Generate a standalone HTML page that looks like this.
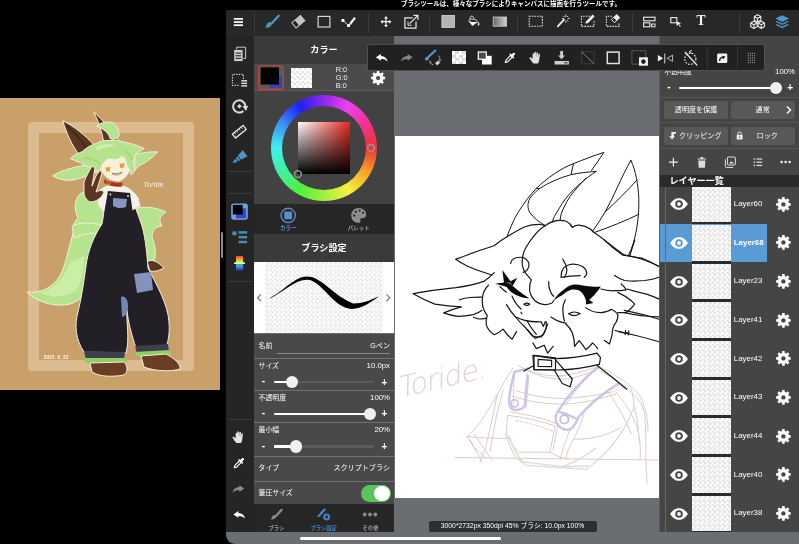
<!DOCTYPE html>
<html lang="ja">
<head>
<meta charset="utf-8">
<title>MediBang Paint</title>
<style>
*{box-sizing:border-box;margin:0;padding:0}
html,body{width:799px;height:544px;overflow:hidden;background:#000}
body{position:relative;font-family:"Liberation Sans","Noto Sans CJK JP",sans-serif;color:#fff}
.abs{position:absolute}
svg{display:block;overflow:visible}
.ck{background:repeating-conic-gradient(#e9e9e9 0% 25%,#fff 0% 50%) 0 0/4.5px 4.5px}
.ck2{background:repeating-conic-gradient(#e3e3e3 0% 25%,#fff 0% 50%) 0 0/4.9px 4.9px}
#art{left:0;top:98px;width:220px;height:291.5px;background:#c9a06a}
#frame{left:27.5px;top:122.3px;width:166.5px;height:248.4px;border:11px solid #ddbb91;border-radius:4px}
#screen{left:225.5px;top:10px;width:574px;height:534px;background:#6a6e73;border-radius:0 0 0 9px}
#tip{left:401px;top:-0.8px;height:10px;font-size:6.5px;line-height:10px;white-space:nowrap;font-weight:bold}
#topbar{left:225.5px;top:10px;width:574px;height:25.5px;background:#282828}
.vsep{position:absolute;width:1px;background:#3c3c3c}
#lcol{left:225.5px;top:35.5px;width:28.5px;height:496.5px;background:#252525}
.hsep{position:absolute;height:1px;background:#3c3c3c}
.hsep2{position:absolute;height:1.4px;background:#565656}
#cpanel{left:254px;top:35.5px;width:140px;height:496.5px;background:#424242}
.hdr{position:absolute;width:140px;background:#3a3a3a;text-align:center;font-weight:bold;font-size:9.1px;white-space:nowrap}
.row{position:absolute;width:140px;background:#494949;border-top:1.3px solid #707070}
.lab{position:absolute;font-size:6.9px;line-height:10px;color:#fff;white-space:nowrap}
.val{position:absolute;font-size:7.8px;line-height:10px;color:#fff;white-space:nowrap}
.trk{position:absolute;height:2.2px;border-radius:1px;background:#5c5c5c}
.trk i{position:absolute;left:0;top:0;height:2.2px;background:#fff;border-radius:1px}
.knob{position:absolute;border-radius:50%;background:#eef1f4}
.pm{position:absolute;font-size:10px;font-weight:bold;line-height:10px;width:8px;text-align:center}
#rpanel{left:659px;top:35.5px;width:140px;height:496.5px;background:#454545;border-left:1px solid #5a5c5f}
.btn{position:absolute;background:#585858;border-radius:3px;font-size:7.1px;text-align:center;color:#fff;white-space:nowrap}
#fbar{left:366.8px;top:44.2px;width:398.4px;height:27.2px;background:#212121;border:1px solid #505050;border-radius:3px}
#canvas{left:395px;top:136px;width:264px;height:362.3px;background:#fff}
#status{left:428.5px;top:521px;width:168px;height:10.5px;background:#2e2f31;border-radius:2px;font-size:6.8px;line-height:10.5px;text-align:center;color:#fff;white-space:nowrap}
#home{left:299.5px;top:536.5px;width:201px;height:3.5px;border-radius:2px;background:#fff}
#wrap{position:absolute;left:0;top:0;width:799px;height:544px;will-change:transform}
</style>
</head>
<body>
<div id="wrap">
<div id="art" class="abs"></div><div id="frame" class="abs"></div>
<svg class="abs" style="left:0;top:0" width="225" height="544" viewBox="0 0 225 544"><path d="M82,212 C70,232 68,262 60,276 C52,288 40,294 27,292 C36,301 50,306 64,305 C78,304 86,296 90,280 C94,262 96,236 98,220Z" fill="#b6e48e" stroke="#f3eedd" stroke-width="1" stroke-linejoin="round"/><path d="M70,262 C64,280 52,290 40,293 C52,298 66,298 76,290 C82,282 84,268 84,256Z" fill="#d4f2b0" opacity="0.7"/><path d="M137,208 C146,206 158,208 166,212 C160,216 158,220 162,226 C156,226 152,230 152,238 C156,246 156,256 154,262 L148,264 C146,250 142,236 138,226Z" fill="#b6e48e" stroke="#f3eedd" stroke-width="1" stroke-linejoin="round"/><path d="M147,262 C152,258 158,262 164,268 C160,270 156,272 150,271Z" fill="#5b3722" stroke="#f3eedd" stroke-width="1" stroke-linejoin="round"/><path d="M80,194 C74,200 74,210 78,218 C74,222 72,228 74,232 C80,230 86,230 90,234 C94,228 100,226 104,228 C104,218 104,206 100,196 C94,190 86,190 80,194Z" fill="#b6e48e" stroke="#f3eedd" stroke-width="1" stroke-linejoin="round"/><path d="M72,226 C80,222 92,222 104,226 L102,234 C92,232 82,234 74,238Z" fill="#b6e48e" stroke="#f3eedd" stroke-width="1" stroke-linejoin="round"/><path d="M108,191 L130,193 C134,204 138,214 142,226 C146,240 147,256 148,268 C156,284 168,304 169,322 C170,334 168,342 166,347 L136,348 C132,336 128,322 127,310 C126,322 130,338 126,353 L84,352 C76,340 74,326 78,312 C82,296 84,280 86,266 C88,250 94,236 102,224 C104,212 106,200 108,191Z" fill="#222026" stroke="#f3eedd" stroke-width="1" stroke-linejoin="round"/><path d="M100,190 C104,186 112,184 120,186 C128,186 134,192 138,198 L140,206 L132,210 L130,194 L108,192 L104,212 L98,204Z" fill="#f4f1ea" stroke="#f3eedd" stroke-width="1" stroke-linejoin="round"/><path d="M108,191 L130,193 L133,214 L104,214Z" fill="#222026"/><path d="M113,198 L127,199 L126,207 C121,209 117,208 113,206Z" fill="#8796c0"/><circle cx="110.4" cy="194.4" r="1" fill="#ddd"/><circle cx="128" cy="196" r="1" fill="#ddd"/><path d="M134,274 L151,272 L153,290 L137,293Z" fill="#8393bd"/><path d="M121,297 C125,295 128,300 128,306 C128,312 126,316 122,317Z" fill="#7786b0"/><path d="M84,351 L125,352 L124,360 L86,360Z" fill="#3e3e4c"/><path d="M135,346 L168,344 L169,352 L137,354Z" fill="#3e3e4c"/><path d="M84,358 L126,358 L127,363 L122,362 L119,365 L114,362 L109,365 L104,362 L99,365 L94,362 L89,364 L85,362Z" fill="#8fcf63"/><path d="M134,352 L170,350 L171,355 L166,354 L162,357 L157,355 L152,358 L147,355 L142,358 L137,356Z" fill="#8fcf63"/><path d="M90,363 L124,362 C128,366 128,372 124,375 C112,377 100,377 92,372Z" fill="#6b3d24" stroke="#f3eedd" stroke-width="1" stroke-linejoin="round"/><path d="M141,356 L166,354 C174,358 181,364 180,369 C170,372 154,371 144,367Z" fill="#6b3d24" stroke="#f3eedd" stroke-width="1" stroke-linejoin="round"/><path d="M62.8,120.8 C74,126 86,136 94,145 L80,156 C72,146 66,132 62.8,120.8Z" fill="#5b3722" stroke="#f3eedd" stroke-width="1" stroke-linejoin="round"/><path d="M66,125 C74,132 82,141 88,150" fill="none" stroke="#3e2415" stroke-width="1.2"/><path d="M93.7,112 C101,118 112,130 119.5,142 L103.8,142.4 C102,132 98,120 93.7,112Z" fill="#5b3722" stroke="#f3eedd" stroke-width="1" stroke-linejoin="round"/><path d="M96.7,126.2 C102,121 110,121.3 113.5,123.4 C117.5,126 119.6,131 119,136 C117,139.4 113,140.4 110,138.4 C109,133 104,129 96.7,126.2Z" fill="#b6e48e" stroke="#f3eedd" stroke-width="1" stroke-linejoin="round"/><path d="M90.7,164.7 C76,166 62,170 52.6,175.8 C58,179 64,180.4 70.5,180.4 C77,179.6 83,177.6 88.7,174.8 L98,172Z" fill="#b6e48e" stroke="#f3eedd" stroke-width="1" stroke-linejoin="round"/><path d="M135.2,154.6 C143,152.4 150,151.6 157.8,151.9 C152,158 146,162.6 139.2,165.7 L134,171Z" fill="#b6e48e" stroke="#f3eedd" stroke-width="1" stroke-linejoin="round"/><path d="M102,160 C110,155 124,155 130,161 C132,170 128,178 119,181.4 C110,181.4 104,177 101,170Z" fill="#f7efd9"/><path d="M70.5,158.6 C74,155 78,153 82.6,151.5 C86,147.6 91,145 96.7,143.4 C101,141 106,140 110.9,140.4 C116,140 121,141 125,142.4 C130,143 135,144.6 139.2,146.5 L144.3,148.5 C141,150.6 138,152.6 135.2,154.5 C134,157 133.2,159.4 133.2,161.6 C134.4,164 135.2,167 135.2,169.7 C134.4,172 133,173.8 131.1,174.8 C130.4,171.4 129,168.4 127.1,165.7 C126.4,162 125,158.6 123,155.6 C121,157.4 119,158.8 117,159.6 C114,159.8 111.4,159.4 108.9,158.6 C106.6,160 104.6,161.8 102.8,163.7 C101.4,166.4 100.4,169 99.8,171.8 C96.4,171 93.4,169.6 90.7,167.7 C87,166.4 83.6,164.8 80.6,162.6 C77,161.6 73.6,160.2 70.5,158.6Z" fill="#b6e48e" stroke="#f3eedd" stroke-width="1" stroke-linejoin="round"/><path d="M96,147 C102,143.4 110,143 117,146 C110,146 103,147.6 97,151Z" fill="#d4f2b0" opacity="0.8"/><path d="M84,158 C90,158 96,160 100,164 M124,150 C128,152 131,156 132,160" fill="none" stroke="#8fcf63" stroke-width="1"/><path d="M105.4,167.6 L110.4,167 L109.6,171.4 L106.4,171.6Z" fill="#e8a020"/><path d="M119.4,164 L124.6,163 L123.6,167.8 L120.4,168Z" fill="#e8a020"/><path d="M112,173.4 C115,176 119.6,175.4 122,172.2 C119,173.4 115,174 112,173.4Z" fill="#fff" stroke="#6b3d24" stroke-width="0.6"/><path d="M104.6,179 C110,182 116,183.4 122.6,182.6 L122,186.4 C116,187.4 109,186 104,183Z" fill="#a83424"/><rect x="107" y="180.6" width="3" height="3.6" fill="none" stroke="#e0b040" stroke-width="0.7"/><path d="M84,182 C86,176 90,170 92,166 L95,168 C94,174 93,180 92,186 L96,176 L100,170 L102,173 C100,180 98,186 96,192 C100,190 102,190 104,192 C102,198 96,202 90,202 C86,200 84,196 84,192Z" fill="#5b3722" stroke="#f3eedd" stroke-width="1" stroke-linejoin="round"/><text x="143.6" y="186.6" font-family="Liberation Sans,sans-serif" font-size="6.6" fill="#fdf8ec" font-style="italic" letter-spacing="0.3">Toride.</text><text x="43.6" y="358.6" font-family="Liberation Mono,monospace" font-size="4.6" fill="#fdf8ec" font-weight="bold">2022.6.22</text></svg>
<div class="abs" style="left:221px;top:232px;width:2px;height:26px;background:#8c8c8c;border-radius:1px"></div>
<div id="screen" class="abs"></div>
<div id="tip" class="abs">ブラシツールは、様々なブラシによりキャンバスに描画を行うツールです。</div>
<div id="canvas" class="abs"></div>
<svg class="abs" style="left:395px;top:136px" width="264" height="362.3" viewBox="395 136 264 362.3"><g fill="none" stroke="#ddcbc7" stroke-width="1" stroke-linecap="round"><path d="M455,457.5 L657.6,460"/><path d="M513,368 C507,377 502,386 497.3,394.4 C492,404 487,412 481.5,420.7 C477,427 472,432 467,436.5 L473.7,447 L486.8,458.8"/><path d="M467,436.5 C480,438 494,438.6 508,438.4"/><path d="M470,440 L482,462 M474,434 L492,460"/><path d="M497.3,394.4 L492,420 L486,446 L480,462"/><path d="M503,390 L496,418 L490,452"/><path d="M514.4,370.8 L513,407.6"/><path d="M518.3,365.5 C530,372 544,376 558,376 C572,375 586,371 597.2,366.8"/><path d="M522,368 C536,376 552,380 566,379 C580,377 592,372 602,367"/><path d="M528.8,376 L526.2,407.6"/><path d="M515.7,390.5 C532,396 548,398.6 565.6,398.4 C582,397.6 598,395 612.9,391.8"/><path d="M512,396 C530,402 548,404.6 566,404 C584,403 600,399 616,394"/><path d="M507.8,415.4 C523,417 540,420.6 555.1,426 L549.9,452.2 L518.3,452.2 C513,446 509,440 506.5,433.8Z"/><path d="M510,412 C526,414 542,418 558,424 L553,450"/><path d="M597.2,368.1 C585,379 574,392 565.6,404.9"/><path d="M599.8,370.8 C612,377 624,385 634,394.4 C639,400 642.5,406 644.5,412.8 C646,428 646,444 645.8,460.1 L647.1,483.8"/><path d="M604,369 C618,376 631,385 640,396 C646,408 648,420 648,432"/><path d="M607.7,391.8 C617,404 625,418 631.3,433.8"/><path d="M612,388 C622,398 630,410 636,424 C640,436 641,448 640,460"/><path d="M565.6,458.8 C567,452 570,445 573.5,439.1 C578,430 582,422 584,414"/><path d="M560,460 C562,450 566,440 570,430"/><path d="M573.5,439.1 C590,440 606,436 620,428"/><path d="M549.9,452.2 C556,456 562,458 568,459"/><path d="M515.7,420.7 C528,422.5 541,426.4 552.5,431.2" stroke-dasharray="3 2"/></g><g fill="none" stroke="#c4bce2" stroke-width="2.4" stroke-linecap="round" opacity="0.85"><path d="M528.8,368.1 L514.4,372.1 C512,381 510,390 509.1,399.7 C508.6,406 511,410 515,410 C520,410 524,408 524.9,404.9 C525.6,395 526.6,385 527.5,374.7"/><path d="M598.5,366.8 C583,379 569,394 557.8,411.5 C555,416 555,421 558,425 C562,430 568,431 572,428 C575,425 577,421 578.8,416.8"/><path d="M618.2,383.9 C603,393 590,404 578.8,416.8"/><path d="M557.8,411.5 C564,413 571,415.6 577,419"/></g><circle cx="514.6" cy="403.4" r="3.6" fill="none" stroke="#c4bce2" stroke-width="1.6"/><circle cx="564.3" cy="419.4" r="4.2" fill="none" stroke="#c4bce2" stroke-width="1.8"/><g fill="none" stroke="#d3e0d4" stroke-width="1.3" stroke-linecap="round"><path d="M505.2,433.8 C508,442 511.5,450 515.7,457.5 L526.2,465.4 L586.7,469.3 C596,462 605,454 612.9,444.4 C622,433 629,421 634,407.6 C634,401 633,395 631.3,389.2"/><path d="M509,436 C512,446 517,455 523,462 L563,466.7 L588,466"/><path d="M563,466.7 C575,462 586,456 596,448"/><path d="M634,405 C637,417 639,429 639.2,441.7"/></g><text x="0" y="0" font-family="DejaVu Sans,Liberation Sans,sans-serif" font-weight="200" font-size="29" fill="#e2d3cf" transform="translate(399 398) rotate(-13) skewX(-14)" letter-spacing="-1">Toride.</text><g fill="none" stroke="#161616" stroke-width="1.2" stroke-linecap="round" stroke-linejoin="round"><path d="M507,236.8 C511,226 514,219 518.3,212.1 C524,203 530,195 536.3,188.4 C542,183 548,178 554.3,173.8 C560,170 566,166.5 573.5,163.6 C584,159.5 594,155.5 603.9,152.4 C601.5,156 599,159.5 597.1,162.5 C595,165.5 593,168 591.5,170.4" stroke-width="1"/><path d="M573.5,163.6 L571.2,173.8" stroke-width="1"/><path d="M596,171.5 C587,172 578,173 570.1,174.9 C559,178 548,183 539.7,188.4 C534,193 530,197 528.4,201.9 C527.5,206 528,209 529.5,212.1 C533,217.5 539,222 545.3,225.6" stroke-width="1"/><path d="M596,171.5 C591,175 586.5,178 582.5,181.7 C576,187 570.5,192.5 565.6,198.6 C561,205 557.5,211 554.3,216.6 L552.1,222.2" stroke-width="1"/><path d="M585.9,178.3 C580,184 575,190 570.1,196.3 C566,203 563,208.5 561.1,214.3 L560,220.4" stroke-width="1"/><path d="M539.7,188.4 L536.3,188.4" stroke-width="1"/><path d="M630.9,160.3 C626,169 621.5,178 617.4,187.3 C613.5,196 609.5,204 605,212.1 C601,219 597,225 592.6,231.2" stroke-width="1"/><path d="M630.9,160.3 C633.5,166 635.3,172 636.5,178.3 C637.8,185 638.6,192 638.8,198.6 C639,206 638.6,214 637.7,221.1 C636.8,229 635.3,236.5 633.2,243.6 C632,247.5 630.4,251.5 628.6,254.9" stroke-width="1"/><path d="M605,212.1 C616,202 627,191 636.5,180.5" stroke-width="1"/><path d="M594.9,232.3 C610,227 625,221 638.8,214.3" stroke-width="1"/><path d="M455.8,259.3 C462,257 468,254.8 473.8,252.5 C481,250 488,247.6 494.1,245.8 C500,241 504,238.5 507,236.8 C513,233 519,229.5 525,226.7 C530,225 535.5,224.3 540.8,224.5 L545.3,225.6"/><path d="M545.3,225.6 C548.5,223 552.5,221.2 556.6,220.6 C560.5,220.1 564,220.5 566.7,221.5 C569.5,223 571.2,225 572.3,227.4 C574.5,225.8 576.8,225 579.1,225.1 C583.5,225.6 587.3,227 590.4,229 L593.7,232.3"/><path d="M593.7,232.3 C598,235 602,238 606.1,241.4 C612,246 618,250.5 624.1,254.9 C630,256.5 636,257.5 642.2,258.2 C648,260.5 653.5,263.3 659,266.4"/><path d="M455.8,259.3 C459.5,262 463.2,264.2 467.1,266 C473,268.8 479,271 485.1,272.8 L491.8,275"/><path d="M494.3,272.7 C491,276 487.6,279 483.8,281.4 C475,284.4 465.6,286.4 455.9,287.6 C441.6,289 427.3,291 413.1,293.7 C420,297.6 427.3,301 434.9,304.1 C443.6,305.6 452.4,306.5 461.1,306.8"/><path d="M459.4,299.8 C462.8,298.6 466.3,297.8 469.9,297.5 C474,297.2 478,297.1 482.1,297.2"/><path d="M461.1,306.8 C455.2,308.4 449.4,310.4 443.7,312.9 C448.2,314.6 452.8,315.8 457.6,316.4 C463,316.4 468.2,315.8 473.4,314.6 C476.6,313.6 479.5,312.2 482.1,310.3"/><path d="M473.4,317.2 L478.6,319 C481.4,319 484,318.7 486.5,318.1"/><path d="M488.5,285.2 C485.5,288 483.6,291.5 482.8,295.3 C482,299 482,303 482.8,306.6 C483.8,310 485.3,313 487.3,315.6 C486.2,318.5 485.8,321.5 486.2,324.6 C487.5,328.8 490.3,332.2 494.1,334.7 C497.5,333.6 500.5,331.7 503.1,329.1 C505.5,333 508.5,336.4 512.1,339.2 L516.6,331.4"/><path d="M545.3,225.6 C538,230 531,239 525.6,248 C523,253 521.8,259 522.3,264.9 C522.8,268 524,271 525.6,273.2 C527.5,275.6 529.4,277.8 531.3,279.8 C529.8,283.6 529.3,287.5 529.7,291.4 C530.6,295 532.3,298 534.7,300.5 C537.6,303 541,304.4 544.6,304.6 C547.4,304.6 549.8,304 552,303 L553.7,300.5"/><path d="M548.7,281.5 C548.4,285 549,288.4 550.4,291.4 C551.2,293.3 552.3,295 553.7,296.3"/><path d="M510.7,263.3 C511,261 512.5,259.3 514.8,258.3 C517.5,257.2 520.4,257 523.1,257.5 C526,258.6 528,260.6 528.9,263.3 C529.3,265.8 528.7,268 527.2,269.9 C526,271.2 524.7,272 523.1,272.4"/><path d="M562.8,259.1 C565,262.4 566.4,266 566.9,269.9 C566.8,272.6 566,275 564.6,277.2"/><path d="M561.1,276.5 C561,273.4 561.8,270.6 563.6,268.2 C566,265.6 569,264.3 572.7,264.1 C576.4,264 579.8,264.9 582.6,266.6 C585,268.3 586.4,270.5 586.8,273.2 C586.6,274.8 585.8,276.2 584.3,277.3"/><path d="M561.1,277.3 C567.4,276.2 573.8,275.7 580.1,275.7"/><path d="M523.9,304.2 C525.6,302.8 527.8,302.8 529.7,304 C528,305.7 525.8,305.9 523.9,304.2Z"/><path d="M521,312.2 L521.8,313.6"/><path d="M565.3,299.7 C563.6,303 562.8,306.3 562.8,309.6 C562.9,313.6 563.4,317.5 564.4,321.2"/><path d="M568.6,313.8 C572,311.6 576.4,311.6 580.1,313.6 C576.6,316 572.4,316.2 568.6,313.8Z"/><path d="M506.5,304.6 C509,309 512,313.2 515.6,317 C518.5,318.4 521.6,319.5 524.7,320.3 C529,321.4 534.6,321.9 541.2,321.8 L543.4,326.4 L545.2,321.6 L546.2,322"/><path d="M515.6,317 C518.6,320.8 522,324.4 525.6,327.8 C528,330.8 530.4,333.5 533,336 C535.8,336.9 538.6,337.2 541.3,336.9 C543.6,334.2 545.2,331.2 546.2,327.8 L546.2,322"/><path d="M527.2,321.2 C529.8,325.8 532.8,330.2 536.3,334.4"/><path d="M551,317 C556,320.6 561,322.6 566,323.2"/><path d="M499.9,286.4 C501.8,288.6 504,290.6 506.5,292.2"/><path d="M512,296 C514,301 517,305.4 521,309"/><path d="M565.6,323.8 C568.5,326.3 570.8,329.3 572.3,332.8 C573.8,337 574.6,341.6 574.6,346.3 L579.1,340.7 C581.6,343.4 583.9,346.4 585.9,349.7 C588.5,347.8 590.7,345.5 592.6,342.9 C594.5,344.5 596.2,346.4 597.6,348.6"/><path d="M585.7,307.6 C590,311 595.5,312.8 601.5,312.6 C606,312 609.5,310.8 611.1,309.3 C614,310.5 616.2,312.2 617.8,314.3 C618.2,318 617,321.5 614.5,324.5 L612.9,328.3 C612.6,333.6 611.5,338.8 609.5,344 L604.5,340.5"/><path d="M532.9,342.9 L536.3,348.6 L544.2,345.2 L547.6,353.1 L553.2,346.3"/><path d="M527.3,329.4 C529.6,332.8 532.2,335.8 535.2,338.4 L543.1,335 C545,331.4 546.5,327.7 547.6,323.8"/><path d="M604.3,240 C610,245.5 616.3,250.5 622.9,255.2 L629.7,256 L634.7,240"/><path d="M629.7,256 C635,257 640,258.4 644.9,260.3 C649.6,262 654.2,264 658.4,266.2"/><path d="M614.5,275.5 C617.5,277.6 620.9,279.2 624.6,280.5 C631,281.2 638,281.2 644.9,280.5 C650,279.8 654.8,278.7 659.2,277.2"/><path d="M600.9,289 C605.4,290.4 610,291 614.5,290.7 C618.6,290.8 622.5,290.5 626.3,289.8 C625,287.5 623.3,285.5 621.2,283.9"/><path d="M627.1,289 C633.5,291 640,292.7 646.6,294.1 C651,295.6 655.2,297.3 659.2,299.1"/><path d="M617.8,292.4 C622.6,294.6 627.2,297.4 631.4,300.8 L634.7,304.2 C632.3,307.4 629.5,310.2 626.3,312.6 L617.8,312.6"/><path d="M624.6,312.6 C631.4,314.2 638.2,315.4 644.9,316 C649.8,316.5 654.6,316.8 659.2,316.9"/><path d="M624.1,310.3 C636,312.6 648,315.6 659,319.3"/><path d="M619,331.6 C632,334.4 646,337.8 659,341.8"/><path d="M615.1,330.5 L624.1,332.8 M625.6,330.4 L625.2,334.6 M628.8,330.8 L628.4,335 M625.4,332.5 L628.6,332.9"/><path d="M532.9,355.3 L554.3,358.7 C569,358.5 584,356.4 597.1,353.1 L600.5,357.6 L599.4,364.3 C586,367.6 572,369.6 557.7,370 L534,369.6Z"/><path d="M534,355.3 L555.5,357.8 L555.5,370 L534,369.6Z"/><path d="M538.1,359.4 L551.6,360.4 L551.6,366.6 L538.1,366.4Z"/><path d="M555.5,359.8 L572.3,379 L570.1,386.8 L562.2,383.5 L554.3,370"/><path d="M534,365.5 L523.9,371.1"/><path d="M597.1,365.5 C607,373 617,381 626.4,389"/></g><path d="M495,284 C499.5,283 504,282.4 508.2,282.6 C511.6,285 514.4,287.6 517.4,290 C521.2,292.8 525,295.4 529.4,298.6 C524,298.2 519.4,296.8 515,294.6 C511.6,292.6 508.8,290 506.6,287 C503,285.6 499,284.8 495,284Z" fill="#0a0a0a"/><path d="M504,283 L502.4,269.9 L511,282Z" fill="#0a0a0a"/><path d="M509,282 L517.3,277.8 L512.6,286Z" fill="#0a0a0a"/><path d="M553.7,300.5 C556,296.6 559,293.2 562.8,290.6 C566,287.6 569.2,285.6 572.7,284.8 C576,284.2 579.4,284.6 582.6,285.6 C588.6,286.8 594.7,287 600.8,286.4 C599.4,288.8 597.8,291 595.9,293 C594,295.6 591.7,297.8 589.2,299.7 L593.4,303 L585.9,304.6 C586.4,301.4 585.8,298.6 584.3,296.4 C583,294 581.4,292 579.3,290.6 C576.6,289.6 573.8,289.3 571,289.7 C568,290.8 565.2,292.5 562.8,294.7 C559.6,296.4 556.5,298.3 553.7,300.5Z" fill="#0a0a0a"/></svg>
<div id="topbar" class="abs"></div>
<div class="vsep" style="left:253.5px;top:13px;height:20px"></div>
<div class="vsep" style="left:367.5px;top:13px;height:20px"></div>
<div class="vsep" style="left:429.0px;top:13px;height:20px"></div>
<div class="vsep" style="left:517.0px;top:13px;height:20px"></div>
<div class="vsep" style="left:631.5px;top:13px;height:20px"></div>
<div class="vsep" style="left:739.0px;top:13px;height:20px"></div>
<svg class="abs" style="left:0;top:0" width="799" height="544" viewBox="0 0 799 544"><rect x="233.8" y="18.05" width="9.2" height="1.7" fill="#fff"/><rect x="233.8" y="21.20" width="9.2" height="1.7" fill="#fff"/><rect x="233.8" y="24.35" width="9.2" height="1.7" fill="#fff"/><g transform="translate(272.20 21.30) scale(1.00)"><path d="M-0.6,2.2 L6.5,-5.5" stroke="#4f94c4" stroke-width="2.3" stroke-linecap="round" fill="none"/><path d="M-1.9,0.9 C-0.3,1.9 -0.2,4.2 -2.2,5.5 C-3.8,6.5 -5.8,6.5 -7.2,6.3 C-5.9,5.3 -6,3.6 -4.9,2.3 C-4,1.2 -2.9,0.5 -1.9,0.9Z" fill="#4f94c4"/></g><g transform="translate(298.20 21.80) rotate(-40)"><path d="M-5.6,-3.4 h11.4 v6.8 h-11.4z" fill="none" stroke="#c4c4c4" stroke-width="1"/><path d="M-1.6,-3.4 h7.4 v6.8 h-7.4z" fill="#c4c4c4"/></g><rect x="318.1" y="16.4" width="11.8" height="10.6" fill="none" stroke="#d4d4d4" stroke-width="1.2"/><path d="M343,20.4 L348.6,25.6 L351,22.8" fill="none" stroke="#ddd" stroke-width="1"/><rect x="341.5" y="19" width="2.9" height="2.9" fill="#fff"/><rect x="347.1" y="24.1" width="2.9" height="2.9" fill="#fff"/><path d="M350.4,23.6 L355,17.8" stroke="#f0f0f0" stroke-width="2.3" fill="none"/><path d="M349.2,25.2 L349.8,22.8 L351.6,24.2Z" fill="#f0f0f0"/><g transform="translate(386.00 21.70) "><path d="M0,-5.6 L2,-3.2 H0.6 V-0.6 H3.2 V-2 L5.6,0 L3.2,2 V0.6 H0.6 V3.2 H2 L0,5.6 L-2,3.2 H-0.6 V0.6 H-3.2 V2 L-5.6,0 L-3.2,-2 V-0.6 H-0.6 V-3.2 H-2Z" fill="#f2f2f2"/></g><path d="M412.6,17.9 H404.9 V28.2 H416 V21.4" fill="none" stroke="#e8e8e8" stroke-width="1.2"/><path d="M409.6,23.6 L417.4,15.8 M413.4,15.4 H417.9 V19.9" fill="none" stroke="#e8e8e8" stroke-width="1.2"/><path d="M408,21.6 V25.2 H411.6" fill="none" stroke="#e8e8e8" stroke-width="1"/><rect x="441.9" y="15.4" width="12.6" height="12" fill="#b4b4b4" stroke="#d6d6d6" stroke-width="0.8"/><g transform="translate(473.20 21.40) "><path d="M-4.8,-0.4 L-0.8,4.7 L4.6,0.7 L4.4,0 C1.6,1.1 -2,0.7 -4.6,-1Z" fill="#f2f2f2"/><path d="M-4.6,-1 C-3,-3.1 2.6,-2.7 4.4,0" fill="none" stroke="#f2f2f2" stroke-width="0.9"/><path d="M-3.1,-2.5 C-3.4,-5.7 -0.3,-6.6 0.7,-3" fill="none" stroke="#f2f2f2" stroke-width="0.9"/><path d="M4.4,0 C5.9,0.7 6.5,2.1 6.1,3.7 C5.7,4.6 4.6,4.3 4.6,3.3 C4.9,2.1 4.8,1 4.4,0Z" fill="#f2f2f2"/></g><defs><linearGradient id="gr1" x1="0" x2="1" y1="0" y2="0"><stop offset="0" stop-color="#666"/><stop offset="1" stop-color="#d2d2d2"/></linearGradient></defs><rect x="493.2" y="17" width="13.4" height="9.2" fill="url(#gr1)" stroke="#cfcfcf" stroke-width="0.8"/><rect x="529.2" y="16.3" width="13.2" height="10" fill="none" stroke="#e0e0e0" stroke-width="1.1" stroke-dasharray="1.6 1.1"/><path d="M557.8,26.4 L564,19.6" stroke="#f0f0f0" stroke-width="1.7" stroke-linecap="round"/><path d="M565.8,14.6 V17 M565.8,20.6 V22.6 M562.2,18.6 H564 M567.6,18.6 H569.6 M563.4,16 L564.4,17 M568.2,16 L567.2,17 M568.2,21.2 L567.2,20.2" stroke="#f0f0f0" stroke-width="0.9"/><path d="M590,16.3 H581.4 V26.4 H594 V21" fill="none" stroke="#e0e0e0" stroke-width="1.1" stroke-dasharray="1.6 1.1"/><path d="M585.4,23.6 L586,21.4 L592.6,14.6 L594.6,16.6 L587.8,23.2 Z" fill="#f0f0f0"/><path d="M612,16.3 H606.4 V26.4 H619 V22.4" fill="none" stroke="#e0e0e0" stroke-width="1.1" stroke-dasharray="1.6 1.1"/><g transform="translate(615.60 18.60) rotate(-42)"><path d="M-3.6,-2.2 h7.2 v4.4 h-7.2z" fill="none" stroke="#f0f0f0" stroke-width="0.9"/><path d="M-0.8,-2.2 h4.4 v4.4 h-4.4z" fill="#f0f0f0"/></g><rect x="643.6" y="17.2" width="11.4" height="3.6" fill="none" stroke="#eee" stroke-width="1.1"/><rect x="643.6" y="22.8" width="6.2" height="4" fill="none" stroke="#eee" stroke-width="1.1"/><rect x="651.6" y="24" width="3.4" height="2.8" fill="none" stroke="#eee" stroke-width="1"/><rect x="670.8" y="17.6" width="6" height="5.2" fill="none" stroke="#eee" stroke-width="1.1"/><path d="M675.6,20.8 L681.6,23.2 L679.4,24 L681,26.6 L680,27.2 L678.4,24.6 L676.8,26.2Z" fill="#fff" stroke="#282828" stroke-width="0.4"/><path d="M757.60,14.80 l3.24,1.80 v3.60 l-3.24,1.80 l-3.24,-1.80 v-3.60 Z M754.36,16.60 l3.24,1.80 l3.24,-1.80 M757.60,18.40 v3.60" fill="none" stroke="#e6e6e6" stroke-width="1.1" stroke-linejoin="round"/><path d="M753.90,21.20 l3.24,1.80 v3.60 l-3.24,1.80 l-3.24,-1.80 v-3.60 Z M750.66,23.00 l3.24,1.80 l3.24,-1.80 M753.90,24.80 v3.60" fill="none" stroke="#e6e6e6" stroke-width="1.1" stroke-linejoin="round"/><path d="M761.30,21.20 l3.24,1.80 v3.60 l-3.24,1.80 l-3.24,-1.80 v-3.60 Z M758.06,23.00 l3.24,1.80 l3.24,-1.80 M761.30,24.80 v3.60" fill="none" stroke="#e6e6e6" stroke-width="1.1" stroke-linejoin="round"/><path d="M782.2,15.2 L789,18.6 L782.2,22 L775.4,18.6Z" fill="#4a98cc"/><path d="M776.9,20.9 L775.4,21.7 L782.2,25.1 L789,21.7 L787.5,20.9 L782.2,23.5Z" fill="#4a98cc"/><path d="M776.9,24 L775.4,24.8 L782.2,28.2 L789,24.8 L787.5,24 L782.2,26.6Z" fill="#4a98cc"/></svg><div class="abs" style="left:691px;top:13.4px;width:20px;text-align:center;font-family:'Liberation Serif',serif;font-weight:bold;font-size:13.6px;line-height:16px;color:#f4f4f4">T</div>
<div id="lcol" class="abs"></div>
<div class="hsep" style="left:228px;top:171.2px;width:24px"></div>
<div class="hsep" style="left:228px;top:192.8px;width:24px"></div>
<div class="hsep" style="left:228px;top:281.2px;width:24px"></div>
<div class="hsep" style="left:228px;top:419.4px;width:24px"></div>
<svg class="abs" style="left:0;top:0" width="799" height="544" viewBox="0 0 799 544"><path d="M236.6,49.4 V47.2 H245.6 V58.4 H243.2" fill="none" stroke="#c8c8c8" stroke-width="1"/><rect x="234.2" y="49.9" width="8.4" height="11.2" fill="#cdcdcd"/><rect x="235.6" y="52.6" width="5.6" height="1.1" fill="#252525"/><rect x="235.6" y="55.2" width="5.6" height="1.1" fill="#252525"/><rect x="235.6" y="57.8" width="5.6" height="1.1" fill="#252525"/><path d="M243.4,79 V74.4 H232.5 V85.4 H239.6" fill="none" stroke="#d8d8d8" stroke-width="1.2" stroke-dasharray="1.3 1.3"/><rect x="241.3" y="80.05" width="5.8" height="1.5" fill="#d8d8d8"/><rect x="241.3" y="82.60" width="5.8" height="1.5" fill="#d8d8d8"/><rect x="241.3" y="85.15" width="5.8" height="1.5" fill="#d8d8d8"/><path d="M243.3,111 A6.1,6.1 0 1 1 245.3,106" fill="none" stroke="#dcdcdc" stroke-width="2"/><path d="M242.4,106.2 L248.2,105.8 L246,111Z" fill="#dcdcdc"/><path d="M239.4,104 L241.7,106.3 L239.4,108.6 L237.1,106.3Z" fill="#dcdcdc"/><g transform="translate(239.30 131.70) rotate(-39)"><rect x="-6.9" y="-2.5" width="13.8" height="5" fill="none" stroke="#e8e8e8" stroke-width="1.3"/><path d="M-4.2,-2.4 v2.2 M-1.4,-2.4 v2.2 M1.4,-2.4 v2.2 M4.2,-2.4 v2.2" stroke="#e8e8e8" stroke-width="0.8"/></g><g transform="translate(239.10 158.00) rotate(-39)"><path d="M7.75,-3.9 L7.75,3.9 L0.4,2.5 L0.4,-2.5Z" fill="#4f94c4"/><rect x="-2.6" y="-2.2" width="2.2" height="4.4" fill="#4f94c4"/><path d="M-3.4,-1.9 L-7.6,-0.7 L-7.6,0.7 L-3.4,1.9Z" fill="#4f94c4"/></g><rect x="231.2" y="203.6" width="16.6" height="16.2" rx="2.2" fill="#6aa6e6"/><rect x="235.8" y="208.3" width="10.3" height="10" fill="#4040c8"/><rect x="232.8" y="204.9" width="9.9" height="9.6" fill="#000"/><rect x="232.3" y="231.4" width="4.2" height="3.8" fill="#4a8ab6"/><rect x="238.6" y="231.15" width="8.5" height="2.5" fill="#4a8ab6"/><rect x="238.6" y="235.95" width="8.5" height="2.5" fill="#4a8ab6"/><rect x="238.6" y="240.75" width="8.5" height="2.5" fill="#4a8ab6"/><defs><linearGradient id="rb" x1="0" x2="0" y1="0" y2="1"><stop offset="0" stop-color="#e0452c"/><stop offset="0.22" stop-color="#f0a020"/><stop offset="0.4" stop-color="#e6e040"/><stop offset="0.58" stop-color="#40c060"/><stop offset="0.75" stop-color="#30a0e0"/><stop offset="0.9" stop-color="#3050d8"/><stop offset="1" stop-color="#7040c0"/></linearGradient></defs><rect x="236" y="255.9" width="7.1" height="14.2" fill="url(#rb)"/><rect x="234.1" y="262.4" width="10.8" height="1.6" fill="#fff"/><g transform="translate(238.90 437.20) scale(1.13 1.02)"><path d="M-2.2,5.8 C-3.6,4.2 -4.6,2.2 -5.6,0.6 C-6,-0.2 -5,-1 -4.2,-0.2 L-2.9,1.3 L-2.9,-3.6 C-2.9,-4.7 -1.5,-4.7 -1.5,-3.6 L-1.5,-0.6 L-1.4,-5 C-1.4,-6.1 0,-6.1 0,-5 L0.1,-0.7 L0.4,-4.6 C0.5,-5.7 1.9,-5.6 1.8,-4.5 L1.7,-0.4 L2.3,-3.3 C2.5,-4.3 3.8,-4.1 3.6,-3 L3,1.6 C2.9,3.4 2.6,4.6 1.8,5.8 Z" fill="#e4e4e4"/></g><g transform="translate(238.90 463.10) "><path d="M-4.7,4.7 L-4,2.3 L0.9,-2.6 L2.6,-0.9 L-2.3,4 Z" fill="none" stroke="#fff" stroke-width="1.1" stroke-linejoin="round"/><path d="M0.2,-3.4 L3.4,-0.2" fill="none" stroke="#fff" stroke-width="1.5" stroke-linecap="round"/><path d="M1.8,-1.8 L3.9,-3.9" fill="none" stroke="#fff" stroke-width="2.4" stroke-linecap="round"/></g><g transform="translate(238.50 489.10) scale(-1 1)"><path d="M-5.8,-0.6 L-0.8,-3.9 L-0.8,-2 C3,-1.8 5.4,0.5 5.8,3.8 C4.4,1.9 2.6,1 -0.8,1 L-0.8,2.8 Z" fill="#8a8a8a"/></g><g transform="translate(239.20 515.00) "><path d="M-5.8,-0.6 L-0.8,-3.9 L-0.8,-2 C3,-1.8 5.4,0.5 5.8,3.8 C4.4,1.9 2.6,1 -0.8,1 L-0.8,2.8 Z" fill="#fff"/></g></svg>
<div id="cpanel" class="abs"></div>
<div class="hdr" style="left:254px;top:35.5px;height:28.5px;line-height:28px">カラー</div>
<div class="abs" style="left:254px;top:64px;width:140px;height:27px;background:#4b4b4b;border-bottom:1px solid #5c5c5c"></div>
<div class="abs" style="left:291.1px;top:67.9px;width:21.1px;height:20.1px;background:repeating-conic-gradient(#e4e4e4 0% 25%,#fff 0% 50%) 0 0/5.3px 5px"></div><div class="abs" style="left:335.8px;top:66.0px;font-size:7.3px;line-height:8px;color:#f0f0f0">R:0</div><div class="abs" style="left:335.8px;top:74.2px;font-size:7.3px;line-height:8px;color:#f0f0f0">G:0</div><div class="abs" style="left:335.8px;top:82.3px;font-size:7.3px;line-height:8px;color:#f0f0f0">B:0</div><div class="abs" style="left:270.7px;top:95.3px;width:106px;height:106px;border-radius:50%;background:conic-gradient(from 90deg,#f03232,#f5a428 8.3%,#f5f040 16.7%,#a0f040 25%,#50f040 33.3%,#40f0a0 41.7%,#40f0f0 50%,#3c90f5 58.3%,#2020f0 66.7%,#9028f0 75%,#f040f0 83.3%,#f03290 91.7%,#f03232)"></div><div class="abs" style="left:281.7px;top:106.3px;width:84px;height:84px;border-radius:50%;background:#424242"></div><div class="abs" style="left:297.8px;top:122.2px;width:52.4px;height:52px;background:linear-gradient(to bottom,rgba(0,0,0,0),#000),linear-gradient(to right,#fff,#e8281e)"></div><svg class="abs" style="left:0;top:0" width="799" height="544" viewBox="0 0 799 544"><rect x="258.4" y="65.8" width="25" height="23.6" rx="2.4" fill="#5a5a5a" stroke="#d23a2e" stroke-width="1.1"/><rect x="269.8" y="76.1" width="12.2" height="11.6" fill="#3a3ac8"/><rect x="260.7" y="67.4" width="18.3" height="17.1" fill="#000"/><circle cx="371" cy="148" r="3.4" fill="none" stroke="#929292" stroke-width="1.6"/><circle cx="297.9" cy="174.1" r="3.4" fill="none" stroke="#929292" stroke-width="1.6"/></svg>
<svg class="abs" style="left:369.9px;top:69.9px" width="16.2" height="16.2" viewBox="-8.10 -8.10 16.20 16.20"><path fill-rule="evenodd" fill="#fff" d="M5.25 -1.26 L6.99 -1.22 L6.99 1.22 L5.25 1.26 L4.60 2.82 L5.81 4.08 L4.08 5.81 L2.82 4.60 L1.26 5.25 L1.22 6.99 L-1.22 6.99 L-1.26 5.25 L-2.82 4.60 L-4.08 5.81 L-5.81 4.08 L-4.60 2.82 L-5.25 1.26 L-6.99 1.22 L-6.99 -1.22 L-5.25 -1.26 L-4.60 -2.82 L-5.81 -4.08 L-4.08 -5.81 L-2.82 -4.60 L-1.26 -5.25 L-1.22 -6.99 L1.22 -6.99 L1.26 -5.25 L2.82 -4.60 L4.08 -5.81 L5.81 -4.08 L4.60 -2.82Z M-2.13 0.00 a2.13 2.13 0 1 0 4.26 0 a2.13 2.13 0 1 0 -4.26 0Z"/></svg>
<div class="abs" style="left:254px;top:204px;width:140px;height:29.5px;background:#262626"></div>
<svg class="abs" style="left:0;top:0" width="799" height="544" viewBox="0 0 799 544"><circle cx="288.2" cy="215.4" r="7.1" fill="none" stroke="#5b8fc7" stroke-width="1.4"/><rect x="284.3" y="211.5" width="7.8" height="7.8" rx="1" fill="#5b8fc7"/><path d="M358.6,208 C363,208 366.2,211 366.2,214.6 C366.2,217.6 364,218.4 362,218.2 C360.4,218 359.8,219 360.4,220.4 C361,221.8 360.2,222.8 358.6,222.8 C354.4,222.8 351.2,219.6 351.2,215.4 C351.2,211.2 354.4,208 358.6,208Z" fill="#8e8e8e"/><circle cx="354.2" cy="215.6" r="1.1" fill="#262626"/><circle cx="355.8" cy="211.8" r="1.1" fill="#262626"/><circle cx="359.6" cy="210.6" r="1.1" fill="#262626"/><circle cx="363.0" cy="212.8" r="1.1" fill="#262626"/></svg><div class="abs" style="left:268.2px;top:224.4px;width:40px;text-align:center;font-size:5.5px;line-height:8px;font-weight:bold;color:#5b8fc7;white-space:nowrap">カラー</div><div class="abs" style="left:338.7px;top:224.4px;width:40px;text-align:center;font-size:5.5px;line-height:8px;font-weight:bold;color:#9a9a9a;white-space:nowrap">パレット</div>
<div class="hdr" style="left:254px;top:233.5px;height:28.5px;line-height:28px">ブラシ設定</div>
<div class="abs" style="left:254px;top:262px;width:140px;height:71px;background:#fff"></div>
<div class="abs ck" style="left:265px;top:262px;width:118px;height:71px"></div>
<svg class="abs" style="left:0;top:0" width="799" height="544" viewBox="0 0 799 544"><path d="M270,298 C285,290 295,276.6 307,276.6 C322,276.6 333,296 353,303.4 C362,303.6 370,300.4 378,296.4 L378,297 C370,303 362,308.6 352,309 C333,308.6 322,279.8 307,279.8 C295,279.8 285,291 270,298.4Z" fill="#000"/><path d="M261,294.4 L257.6,297.8 L261,301.2" fill="none" stroke="#808080" stroke-width="1.3"/><path d="M386.4,294.4 L389.8,297.8 L386.4,301.2" fill="none" stroke="#808080" stroke-width="1.3"/></svg>
<div class="row" style="left:254px;top:333.0px;height:25.0px"></div>
<div class="row" style="left:254px;top:358.0px;height:32.4px"></div>
<div class="row" style="left:254px;top:390.4px;height:32.0px"></div>
<div class="row" style="left:254px;top:422.4px;height:33.4px"></div>
<div class="row" style="left:254px;top:455.8px;height:24.9px"></div>
<div class="row" style="left:254px;top:480.7px;height:23.0px"></div>
<div class="lab" style="left:258.5px;top:340.5px;">名前</div>
<div class="val" style="right:409.0px;top:340.5px;font-size:7.1px">Gペン</div>
<div class="abs" style="left:277px;top:352.6px;width:112.5px;height:1px;background:#8a8a8a"></div>
<div class="lab" style="left:258.5px;top:361.3px;">サイズ</div>
<div class="val" style="right:409.0px;top:361.3px;">10.0px</div>
<div class="trk" style="left:273.6px;top:381.2px;width:100.4px"><i style="width:18.3px"></i></div><div class="knob" style="left:285.7px;top:376.1px;width:12.4px;height:12.4px"></div><div class="pm" style="left:259.3px;top:376.3px">-</div><div class="pm" style="left:380.4px;top:377.7px">+</div>
<div class="lab" style="left:258.5px;top:393.0px;">不透明度</div>
<div class="val" style="right:409.0px;top:393.0px;">100%</div>
<div class="trk" style="left:273.6px;top:412.9px;width:100.4px"><i style="width:96.7px"></i></div><div class="knob" style="left:364.1px;top:407.8px;width:12.4px;height:12.4px"></div><div class="pm" style="left:259.3px;top:408.0px">-</div><div class="pm" style="left:380.4px;top:409.4px">+</div>
<div class="lab" style="left:258.5px;top:425.3px;">最小幅</div>
<div class="val" style="right:409.0px;top:425.3px;">20%</div>
<div class="trk" style="left:273.6px;top:445.4px;width:100.4px"><i style="width:22.4px"></i></div><div class="knob" style="left:289.8px;top:440.3px;width:12.4px;height:12.4px"></div><div class="pm" style="left:259.3px;top:440.5px">-</div><div class="pm" style="left:380.4px;top:441.9px">+</div>
<div class="lab" style="left:258.5px;top:463.3px;">タイプ</div>
<div class="val" style="right:409.0px;top:463.3px;font-size:7.1px">スクリプトブラシ</div>
<div class="lab" style="left:258.5px;top:488.3px;">筆圧サイズ</div>
<div class="abs" style="left:360.8px;top:485px;width:29.8px;height:17.4px;border-radius:9px;background:#5cc45e"></div>
<div class="abs" style="left:374.2px;top:486px;width:15.4px;height:15.4px;border-radius:50%;background:#fff"></div>
<div class="abs" style="left:254px;top:503.7px;width:140px;height:28.3px;background:#262626"></div>
<svg class="abs" style="left:0;top:0" width="799" height="544" viewBox="0 0 799 544"><g transform="translate(276.40 514.30) scale(0.80)"><path d="M-0.6,2.2 L6.5,-5.5" stroke="#8a8a8a" stroke-width="2.9" stroke-linecap="round" fill="none"/><path d="M-1.9,0.9 C-0.3,1.9 -0.2,4.2 -2.2,5.5 C-3.8,6.5 -5.8,6.5 -7.2,6.3 C-5.9,5.3 -6,3.6 -4.9,2.3 C-4,1.2 -2.9,0.5 -1.9,0.9Z" fill="#8a8a8a"/></g><g transform="translate(321.20 513.20) "><path d="M-1.8,0.4 L3,-5 L4.8,-3.6 L0,1.8Z" fill="#4f86c6"/><path d="M-2,0.8 C-1,0.4 0.2,1.6 -0.4,2.6 C-1.2,3.8 -3,4 -4.4,3.8 C-3.4,3.2 -3.4,1.6 -2,0.8Z" fill="#4f86c6"/></g><path fill-rule="evenodd" fill="#4f86c6" d="M329.42 516.32 L330.44 516.33 L330.44 517.67 L329.42 517.68 L329.07 518.52 L329.79 519.24 L328.84 520.19 L328.12 519.47 L327.28 519.82 L327.27 520.84 L325.93 520.84 L325.92 519.82 L325.08 519.47 L324.36 520.19 L323.41 519.24 L324.13 518.52 L323.78 517.68 L322.76 517.67 L322.76 516.33 L323.78 516.32 L324.13 515.48 L323.41 514.76 L324.36 513.81 L325.08 514.53 L325.92 514.18 L325.93 513.16 L327.27 513.16 L327.28 514.18 L328.12 514.53 L328.84 513.81 L329.79 514.76 L329.07 515.48Z M325.20 517.00 a1.40 1.40 0 1 0 2.80 0 a1.40 1.40 0 1 0 -2.80 0Z"/><circle cx="364.7" cy="514.5" r="1.9" fill="#8a8a8a"/><circle cx="370.0" cy="514.5" r="1.9" fill="#8a8a8a"/><circle cx="375.3" cy="514.5" r="1.9" fill="#8a8a8a"/></svg><div class="abs" style="left:256.4px;top:524px;width:40px;text-align:center;font-size:5.3px;line-height:8px;font-weight:bold;color:#9a9a9a;white-space:nowrap">ブラシ</div><div class="abs" style="left:303.6px;top:524px;width:40px;text-align:center;font-size:5.3px;line-height:8px;font-weight:bold;color:#4f86c6;white-space:nowrap">ブラシ設定</div><div class="abs" style="left:350.5px;top:524px;width:40px;text-align:center;font-size:5.3px;line-height:8px;font-weight:bold;color:#9a9a9a;white-space:nowrap">その他</div>
<div id="rpanel" class="abs"></div>
<div class="lab" style="left:664.3px;top:67.4px;">不透明度</div>
<div class="val" style="right:4.0px;top:67.2px;">100%</div>
<div class="trk" style="left:679.1px;top:86.7px;width:96.6px"><i style="width:96.6px"></i></div><div class="knob" style="left:769.5px;top:81.6px;width:12.4px;height:12.4px"></div><div class="pm" style="left:665.0px;top:81.8px">-</div><div class="pm" style="left:786.1px;top:83.2px">+</div>
<div class="hsep2" style="left:660px;top:97px;width:139px"></div>
<div class="btn" style="left:663.8px;top:100.9px;width:64.6px;height:18.4px;line-height:18.4px">透明度を保護</div>
<div class="btn" style="left:730.8px;top:100.9px;width:64.4px;height:18.4px;line-height:18.4px"><span style="position:absolute;left:24.8px">通常</span></div>
<svg class="abs" style="left:784px;top:104px" width="9" height="12" viewBox="0 0 9 12"><path d="M2.8 2.6 L6.6 6.1 L2.8 9.6" fill="none" stroke="#fff" stroke-width="1.3"/></svg>
<div class="hsep2" style="left:660px;top:121.6px;width:139px"></div>
<div class="btn" style="left:663.8px;top:126.6px;width:64.6px;height:18.4px;line-height:18.4px"><span style="position:absolute;left:15.2px">クリッピング</span></div>
<div class="btn" style="left:730.8px;top:126.6px;width:64.4px;height:18.4px;line-height:18.4px"><span style="position:absolute;left:25.8px">ロック</span></div>
<div class="hsep2" style="left:660px;top:148px;width:139px"></div>
<svg class="abs" style="left:0;top:0" width="799" height="544" viewBox="0 0 799 544"><path d="M671.4,131.9 H676 V133.8 H673.9 V136.2 H675 L672.1,139.6 L669.2,136.2 H671.4Z" fill="#f0f0f0"/><rect x="736.7" y="135" width="5.8" height="4.6" rx="0.6" fill="#f0f0f0"/><path d="M737.9,135 V133.6 A1.7,1.7 0 0 1 741.3,133.6 V135" fill="none" stroke="#f0f0f0" stroke-width="1"/><rect x="739.2" y="136.4" width="0.9" height="1.8" fill="#505050"/><path d="M669,162.2 H677.8 M673.4,157.8 V166.6" stroke="#f0f0f0" stroke-width="1.2"/><path d="M697.6,158.4 H706 V159.6 H697.6Z M700.4,157 H703.2 V158.4 H700.4Z M698.2,160.4 H705.4 L704.9,167.8 H698.7Z" fill="#dcdcdc"/><rect x="727.4" y="157" width="8" height="8" rx="1" fill="none" stroke="#e0e0e0" stroke-width="1"/><path d="M725.4,159.4 V166.6 A0.8,0.8 0 0 0 726.2,167.4 H733.2" fill="none" stroke="#e0e0e0" stroke-width="1"/><path d="M729,163.4 L730.8,161.2 L732,162.6 L732.8,161.8 L734,163.4Z" fill="#e0e0e0"/><rect x="753.6" y="158.30" width="1.5" height="1.4" fill="#e0e0e0"/><rect x="756.4" y="158.40" width="5.8" height="1.2" fill="#e0e0e0"/><rect x="753.6" y="161.50" width="1.5" height="1.4" fill="#e0e0e0"/><rect x="756.4" y="161.60" width="5.8" height="1.2" fill="#e0e0e0"/><rect x="753.6" y="164.70" width="1.5" height="1.4" fill="#e0e0e0"/><rect x="756.4" y="164.80" width="5.8" height="1.2" fill="#e0e0e0"/><circle cx="781.6" cy="162.1" r="1.25" fill="#f0f0f0"/><circle cx="785.6" cy="162.1" r="1.25" fill="#f0f0f0"/><circle cx="789.6" cy="162.1" r="1.25" fill="#f0f0f0"/></svg>
<div class="abs" style="left:660px;top:174.8px;width:139px;height:12.4px;background:#2a2a2a"></div>
<div class="abs" style="left:669.5px;top:174.8px;font-size:9.1px;line-height:12.4px;font-weight:bold;white-space:nowrap">レイヤー一覧</div>
<div class="abs" style="left:660px;top:187.2px;width:139px;height:344.8px;overflow:hidden">
<div class="abs" style="left:31.8px;top:35.0px;width:39.4px;height:2.9px;background:#2b2b2b"></div>
<div class="abs ck2" style="left:31.8px;top:-0.8px;width:39.4px;height:35.8px"></div>
<div class="abs" style="left:73.8px;top:11.9px;font-size:7.9px;line-height:10px;">Layer60</div>
<div class="abs" style="left:0;top:36.4px;width:106.8px;height:38.7px;background:#5b9bd5"></div>
<div class="abs" style="left:31.8px;top:73.7px;width:39.4px;height:2.9px;background:#2b2b2b"></div>
<div class="abs ck2" style="left:31.8px;top:37.9px;width:39.4px;height:35.8px"></div>
<div class="abs" style="left:73.8px;top:50.6px;font-size:7.9px;line-height:10px;font-weight:bold;">Layer68</div>
<div class="abs" style="left:31.8px;top:112.3px;width:39.4px;height:2.9px;background:#2b2b2b"></div>
<div class="abs ck2" style="left:31.8px;top:76.5px;width:39.4px;height:35.8px"></div>
<div class="abs" style="left:73.8px;top:89.2px;font-size:7.9px;line-height:10px;">Layer23</div>
<div class="abs" style="left:31.8px;top:151.0px;width:39.4px;height:2.9px;background:#2b2b2b"></div>
<div class="abs ck2" style="left:31.8px;top:115.2px;width:39.4px;height:35.8px"></div>
<div class="abs" style="left:73.8px;top:127.9px;font-size:7.9px;line-height:10px;">Layer41</div>
<div class="abs" style="left:31.8px;top:189.6px;width:39.4px;height:2.9px;background:#2b2b2b"></div>
<div class="abs ck2" style="left:31.8px;top:153.8px;width:39.4px;height:35.8px"></div>
<div class="abs" style="left:73.8px;top:166.5px;font-size:7.9px;line-height:10px;">Layer42</div>
<div class="abs" style="left:31.8px;top:228.3px;width:39.4px;height:2.9px;background:#2b2b2b"></div>
<div class="abs ck2" style="left:31.8px;top:192.5px;width:39.4px;height:35.8px"></div>
<div class="abs" style="left:73.8px;top:205.2px;font-size:7.9px;line-height:10px;">Layer43</div>
<div class="abs" style="left:31.8px;top:266.9px;width:39.4px;height:2.9px;background:#2b2b2b"></div>
<div class="abs ck2" style="left:31.8px;top:231.1px;width:39.4px;height:35.8px"></div>
<div class="abs" style="left:73.8px;top:243.8px;font-size:7.9px;line-height:10px;">Layer44</div>
<div class="abs" style="left:31.8px;top:305.6px;width:39.4px;height:2.9px;background:#2b2b2b"></div>
<div class="abs ck2" style="left:31.8px;top:269.8px;width:39.4px;height:35.8px"></div>
<div class="abs" style="left:73.8px;top:282.5px;font-size:7.9px;line-height:10px;">Layer40</div>
<div class="abs" style="left:31.8px;top:344.2px;width:39.4px;height:2.9px;background:#2b2b2b"></div>
<div class="abs ck2" style="left:31.8px;top:308.4px;width:39.4px;height:35.8px"></div>
<div class="abs" style="left:73.8px;top:321.1px;font-size:7.9px;line-height:10px;">Layer38</div>
<div class="abs" style="left:5.2px;top:0;width:1px;height:345px;background:#686868"></div>
</div>
<svg class="abs" style="left:668.7px;top:197.3px" width="20" height="14" viewBox="-10 -7 20 14"><path fill="#fff" d="M-8.9 0 C-6 -4.6 -3 -5.8 0 -5.8 C3 -5.8 6 -4.6 8.9 0 C6 4.6 3 5.8 0 5.8 C-3 5.8 -6 4.6 -8.9 0Z"/><circle r="3.8" fill="#454545"/><circle r="1.9" fill="#fff"/></svg>
<svg class="abs" style="left:775.0px;top:195.6px" width="16.8" height="16.8" viewBox="-8.40 -8.40 16.80 16.80"><path fill-rule="evenodd" fill="#fff" d="M5.47 -1.31 L7.29 -1.27 L7.29 1.27 L5.47 1.31 L4.80 2.94 L6.05 4.26 L4.26 6.05 L2.94 4.80 L1.31 5.47 L1.27 7.29 L-1.27 7.29 L-1.31 5.47 L-2.94 4.80 L-4.26 6.05 L-6.05 4.26 L-4.80 2.94 L-5.47 1.31 L-7.29 1.27 L-7.29 -1.27 L-5.47 -1.31 L-4.80 -2.94 L-6.05 -4.26 L-4.26 -6.05 L-2.94 -4.80 L-1.31 -5.47 L-1.27 -7.29 L1.27 -7.29 L1.31 -5.47 L2.94 -4.80 L4.26 -6.05 L6.05 -4.26 L4.80 -2.94Z M-2.22 0.00 a2.22 2.22 0 1 0 4.44 0 a2.22 2.22 0 1 0 -4.44 0Z"/></svg>
<svg class="abs" style="left:668.7px;top:236.0px" width="20" height="14" viewBox="-10 -7 20 14"><path fill="#fff" d="M-8.9 0 C-6 -4.6 -3 -5.8 0 -5.8 C3 -5.8 6 -4.6 8.9 0 C6 4.6 3 5.8 0 5.8 C-3 5.8 -6 4.6 -8.9 0Z"/><circle r="3.8" fill="#5b9bd5"/><circle r="1.9" fill="#fff"/></svg>
<svg class="abs" style="left:775.0px;top:234.2px" width="16.8" height="16.8" viewBox="-8.40 -8.40 16.80 16.80"><path fill-rule="evenodd" fill="#fff" d="M5.47 -1.31 L7.29 -1.27 L7.29 1.27 L5.47 1.31 L4.80 2.94 L6.05 4.26 L4.26 6.05 L2.94 4.80 L1.31 5.47 L1.27 7.29 L-1.27 7.29 L-1.31 5.47 L-2.94 4.80 L-4.26 6.05 L-6.05 4.26 L-4.80 2.94 L-5.47 1.31 L-7.29 1.27 L-7.29 -1.27 L-5.47 -1.31 L-4.80 -2.94 L-6.05 -4.26 L-4.26 -6.05 L-2.94 -4.80 L-1.31 -5.47 L-1.27 -7.29 L1.27 -7.29 L1.31 -5.47 L2.94 -4.80 L4.26 -6.05 L6.05 -4.26 L4.80 -2.94Z M-2.22 0.00 a2.22 2.22 0 1 0 4.44 0 a2.22 2.22 0 1 0 -4.44 0Z"/></svg>
<svg class="abs" style="left:668.7px;top:274.6px" width="20" height="14" viewBox="-10 -7 20 14"><path fill="#fff" d="M-8.9 0 C-6 -4.6 -3 -5.8 0 -5.8 C3 -5.8 6 -4.6 8.9 0 C6 4.6 3 5.8 0 5.8 C-3 5.8 -6 4.6 -8.9 0Z"/><circle r="3.8" fill="#454545"/><circle r="1.9" fill="#fff"/></svg>
<svg class="abs" style="left:775.0px;top:272.9px" width="16.8" height="16.8" viewBox="-8.40 -8.40 16.80 16.80"><path fill-rule="evenodd" fill="#fff" d="M5.47 -1.31 L7.29 -1.27 L7.29 1.27 L5.47 1.31 L4.80 2.94 L6.05 4.26 L4.26 6.05 L2.94 4.80 L1.31 5.47 L1.27 7.29 L-1.27 7.29 L-1.31 5.47 L-2.94 4.80 L-4.26 6.05 L-6.05 4.26 L-4.80 2.94 L-5.47 1.31 L-7.29 1.27 L-7.29 -1.27 L-5.47 -1.31 L-4.80 -2.94 L-6.05 -4.26 L-4.26 -6.05 L-2.94 -4.80 L-1.31 -5.47 L-1.27 -7.29 L1.27 -7.29 L1.31 -5.47 L2.94 -4.80 L4.26 -6.05 L6.05 -4.26 L4.80 -2.94Z M-2.22 0.00 a2.22 2.22 0 1 0 4.44 0 a2.22 2.22 0 1 0 -4.44 0Z"/></svg>
<svg class="abs" style="left:668.7px;top:313.2px" width="20" height="14" viewBox="-10 -7 20 14"><path fill="#fff" d="M-8.9 0 C-6 -4.6 -3 -5.8 0 -5.8 C3 -5.8 6 -4.6 8.9 0 C6 4.6 3 5.8 0 5.8 C-3 5.8 -6 4.6 -8.9 0Z"/><circle r="3.8" fill="#454545"/><circle r="1.9" fill="#fff"/></svg>
<svg class="abs" style="left:775.0px;top:311.6px" width="16.8" height="16.8" viewBox="-8.40 -8.40 16.80 16.80"><path fill-rule="evenodd" fill="#fff" d="M5.47 -1.31 L7.29 -1.27 L7.29 1.27 L5.47 1.31 L4.80 2.94 L6.05 4.26 L4.26 6.05 L2.94 4.80 L1.31 5.47 L1.27 7.29 L-1.27 7.29 L-1.31 5.47 L-2.94 4.80 L-4.26 6.05 L-6.05 4.26 L-4.80 2.94 L-5.47 1.31 L-7.29 1.27 L-7.29 -1.27 L-5.47 -1.31 L-4.80 -2.94 L-6.05 -4.26 L-4.26 -6.05 L-2.94 -4.80 L-1.31 -5.47 L-1.27 -7.29 L1.27 -7.29 L1.31 -5.47 L2.94 -4.80 L4.26 -6.05 L6.05 -4.26 L4.80 -2.94Z M-2.22 0.00 a2.22 2.22 0 1 0 4.44 0 a2.22 2.22 0 1 0 -4.44 0Z"/></svg>
<svg class="abs" style="left:668.7px;top:351.9px" width="20" height="14" viewBox="-10 -7 20 14"><path fill="#fff" d="M-8.9 0 C-6 -4.6 -3 -5.8 0 -5.8 C3 -5.8 6 -4.6 8.9 0 C6 4.6 3 5.8 0 5.8 C-3 5.8 -6 4.6 -8.9 0Z"/><circle r="3.8" fill="#454545"/><circle r="1.9" fill="#fff"/></svg>
<svg class="abs" style="left:775.0px;top:350.2px" width="16.8" height="16.8" viewBox="-8.40 -8.40 16.80 16.80"><path fill-rule="evenodd" fill="#fff" d="M5.47 -1.31 L7.29 -1.27 L7.29 1.27 L5.47 1.31 L4.80 2.94 L6.05 4.26 L4.26 6.05 L2.94 4.80 L1.31 5.47 L1.27 7.29 L-1.27 7.29 L-1.31 5.47 L-2.94 4.80 L-4.26 6.05 L-6.05 4.26 L-4.80 2.94 L-5.47 1.31 L-7.29 1.27 L-7.29 -1.27 L-5.47 -1.31 L-4.80 -2.94 L-6.05 -4.26 L-4.26 -6.05 L-2.94 -4.80 L-1.31 -5.47 L-1.27 -7.29 L1.27 -7.29 L1.31 -5.47 L2.94 -4.80 L4.26 -6.05 L6.05 -4.26 L4.80 -2.94Z M-2.22 0.00 a2.22 2.22 0 1 0 4.44 0 a2.22 2.22 0 1 0 -4.44 0Z"/></svg>
<svg class="abs" style="left:668.7px;top:390.6px" width="20" height="14" viewBox="-10 -7 20 14"><path fill="#fff" d="M-8.9 0 C-6 -4.6 -3 -5.8 0 -5.8 C3 -5.8 6 -4.6 8.9 0 C6 4.6 3 5.8 0 5.8 C-3 5.8 -6 4.6 -8.9 0Z"/><circle r="3.8" fill="#454545"/><circle r="1.9" fill="#fff"/></svg>
<svg class="abs" style="left:775.0px;top:388.9px" width="16.8" height="16.8" viewBox="-8.40 -8.40 16.80 16.80"><path fill-rule="evenodd" fill="#fff" d="M5.47 -1.31 L7.29 -1.27 L7.29 1.27 L5.47 1.31 L4.80 2.94 L6.05 4.26 L4.26 6.05 L2.94 4.80 L1.31 5.47 L1.27 7.29 L-1.27 7.29 L-1.31 5.47 L-2.94 4.80 L-4.26 6.05 L-6.05 4.26 L-4.80 2.94 L-5.47 1.31 L-7.29 1.27 L-7.29 -1.27 L-5.47 -1.31 L-4.80 -2.94 L-6.05 -4.26 L-4.26 -6.05 L-2.94 -4.80 L-1.31 -5.47 L-1.27 -7.29 L1.27 -7.29 L1.31 -5.47 L2.94 -4.80 L4.26 -6.05 L6.05 -4.26 L4.80 -2.94Z M-2.22 0.00 a2.22 2.22 0 1 0 4.44 0 a2.22 2.22 0 1 0 -4.44 0Z"/></svg>
<svg class="abs" style="left:668.7px;top:429.2px" width="20" height="14" viewBox="-10 -7 20 14"><path fill="#fff" d="M-8.9 0 C-6 -4.6 -3 -5.8 0 -5.8 C3 -5.8 6 -4.6 8.9 0 C6 4.6 3 5.8 0 5.8 C-3 5.8 -6 4.6 -8.9 0Z"/><circle r="3.8" fill="#454545"/><circle r="1.9" fill="#fff"/></svg>
<svg class="abs" style="left:775.0px;top:427.5px" width="16.8" height="16.8" viewBox="-8.40 -8.40 16.80 16.80"><path fill-rule="evenodd" fill="#fff" d="M5.47 -1.31 L7.29 -1.27 L7.29 1.27 L5.47 1.31 L4.80 2.94 L6.05 4.26 L4.26 6.05 L2.94 4.80 L1.31 5.47 L1.27 7.29 L-1.27 7.29 L-1.31 5.47 L-2.94 4.80 L-4.26 6.05 L-6.05 4.26 L-4.80 2.94 L-5.47 1.31 L-7.29 1.27 L-7.29 -1.27 L-5.47 -1.31 L-4.80 -2.94 L-6.05 -4.26 L-4.26 -6.05 L-2.94 -4.80 L-1.31 -5.47 L-1.27 -7.29 L1.27 -7.29 L1.31 -5.47 L2.94 -4.80 L4.26 -6.05 L6.05 -4.26 L4.80 -2.94Z M-2.22 0.00 a2.22 2.22 0 1 0 4.44 0 a2.22 2.22 0 1 0 -4.44 0Z"/></svg>
<svg class="abs" style="left:668.7px;top:467.9px" width="20" height="14" viewBox="-10 -7 20 14"><path fill="#fff" d="M-8.9 0 C-6 -4.6 -3 -5.8 0 -5.8 C3 -5.8 6 -4.6 8.9 0 C6 4.6 3 5.8 0 5.8 C-3 5.8 -6 4.6 -8.9 0Z"/><circle r="3.8" fill="#454545"/><circle r="1.9" fill="#fff"/></svg>
<svg class="abs" style="left:775.0px;top:466.2px" width="16.8" height="16.8" viewBox="-8.40 -8.40 16.80 16.80"><path fill-rule="evenodd" fill="#fff" d="M5.47 -1.31 L7.29 -1.27 L7.29 1.27 L5.47 1.31 L4.80 2.94 L6.05 4.26 L4.26 6.05 L2.94 4.80 L1.31 5.47 L1.27 7.29 L-1.27 7.29 L-1.31 5.47 L-2.94 4.80 L-4.26 6.05 L-6.05 4.26 L-4.80 2.94 L-5.47 1.31 L-7.29 1.27 L-7.29 -1.27 L-5.47 -1.31 L-4.80 -2.94 L-6.05 -4.26 L-4.26 -6.05 L-2.94 -4.80 L-1.31 -5.47 L-1.27 -7.29 L1.27 -7.29 L1.31 -5.47 L2.94 -4.80 L4.26 -6.05 L6.05 -4.26 L4.80 -2.94Z M-2.22 0.00 a2.22 2.22 0 1 0 4.44 0 a2.22 2.22 0 1 0 -4.44 0Z"/></svg>
<svg class="abs" style="left:668.7px;top:506.5px" width="20" height="14" viewBox="-10 -7 20 14"><path fill="#fff" d="M-8.9 0 C-6 -4.6 -3 -5.8 0 -5.8 C3 -5.8 6 -4.6 8.9 0 C6 4.6 3 5.8 0 5.8 C-3 5.8 -6 4.6 -8.9 0Z"/><circle r="3.8" fill="#454545"/><circle r="1.9" fill="#fff"/></svg>
<svg class="abs" style="left:775.0px;top:504.8px" width="16.8" height="16.8" viewBox="-8.40 -8.40 16.80 16.80"><path fill-rule="evenodd" fill="#fff" d="M5.47 -1.31 L7.29 -1.27 L7.29 1.27 L5.47 1.31 L4.80 2.94 L6.05 4.26 L4.26 6.05 L2.94 4.80 L1.31 5.47 L1.27 7.29 L-1.27 7.29 L-1.31 5.47 L-2.94 4.80 L-4.26 6.05 L-6.05 4.26 L-4.80 2.94 L-5.47 1.31 L-7.29 1.27 L-7.29 -1.27 L-5.47 -1.31 L-4.80 -2.94 L-6.05 -4.26 L-4.26 -6.05 L-2.94 -4.80 L-1.31 -5.47 L-1.27 -7.29 L1.27 -7.29 L1.31 -5.47 L2.94 -4.80 L4.26 -6.05 L6.05 -4.26 L4.80 -2.94Z M-2.22 0.00 a2.22 2.22 0 1 0 4.44 0 a2.22 2.22 0 1 0 -4.44 0Z"/></svg>
<div id="fbar" class="abs"></div>
<div class="abs" style="left:452.1px;top:50.9px;width:14px;height:13.6px;background:repeating-conic-gradient(#dcdcdc 0% 25%,#fff 0% 50%) 0 0/7px 6.8px"></div><svg class="abs" style="left:0;top:0" width="799" height="544" viewBox="0 0 799 544"><g transform="translate(381.70 57.90) "><path d="M-5.8,-0.6 L-0.8,-3.9 L-0.8,-2 C3,-1.8 5.4,0.5 5.8,3.8 C4.4,1.9 2.6,1 -0.8,1 L-0.8,2.8 Z" fill="#fff"/></g><g transform="translate(406.80 57.90) scale(-1 1)"><path d="M-5.8,-0.6 L-0.8,-3.9 L-0.8,-2 C3,-1.8 5.4,0.5 5.8,3.8 C4.4,1.9 2.6,1 -0.8,1 L-0.8,2.8 Z" fill="#858585"/></g><path d="M428.6,56.8 L435.2,50.6" stroke="#4f94c4" stroke-width="2.2" stroke-linecap="round"/><ellipse cx="427" cy="58.6" rx="2.2" ry="1.7" transform="rotate(-40 427 58.6)" fill="#4f94c4"/><path d="M438.4,55.6 A5,5 0 0 1 440,59.4 M433.4,65 A5,5 0 0 1 430,62" fill="none" stroke="#8a8a8a" stroke-width="1.1"/><path d="M438,59.6 L441.6,59.6 L439.8,62Z M431.4,60.8 L429,61 L430,64Z" fill="#8a8a8a"/><g transform="translate(437.60 62.90) rotate(-40)"><rect x="-2" y="-1.6" width="4" height="3.2" fill="#d0d0d0"/></g><rect x="482" y="55.8" width="9.7" height="8.7" fill="#fff"/><rect x="478.3" y="52" width="8" height="7.2" fill="#4a4a4a" stroke="#fff" stroke-width="1.2"/><g transform="translate(510.00 57.80) "><path d="M-4.7,4.7 L-4,2.3 L0.9,-2.6 L2.6,-0.9 L-2.3,4 Z" fill="none" stroke="#fff" stroke-width="1.1" stroke-linejoin="round"/><path d="M0.2,-3.4 L3.4,-0.2" fill="none" stroke="#fff" stroke-width="1.5" stroke-linecap="round"/><path d="M1.8,-1.8 L3.9,-3.9" fill="none" stroke="#fff" stroke-width="2.4" stroke-linecap="round"/></g><g transform="translate(535.90 57.70) scale(1.13 1.02)"><path d="M-2.2,5.8 C-3.6,4.2 -4.6,2.2 -5.6,0.6 C-6,-0.2 -5,-1 -4.2,-0.2 L-2.9,1.3 L-2.9,-3.6 C-2.9,-4.7 -1.5,-4.7 -1.5,-3.6 L-1.5,-0.6 L-1.4,-5 C-1.4,-6.1 0,-6.1 0,-5 L0.1,-0.7 L0.4,-4.6 C0.5,-5.7 1.9,-5.6 1.8,-4.5 L1.7,-0.4 L2.3,-3.3 C2.5,-4.3 3.8,-4.1 3.6,-3 L3,1.6 C2.9,3.4 2.6,4.6 1.8,5.8 Z" fill="#e0e0e0"/></g><path d="M560.2,50.9 H563 V55.4 H565 L561.6,59.2 L558.2,55.4 H560.2Z" fill="#cfcfcf"/><rect x="554.6" y="61" width="14.3" height="3.5" fill="#cfcfcf"/><rect x="564.2" y="62" width="3.4" height="1.5" fill="#555"/><rect x="581.6" y="51.8" width="12.4" height="12" fill="none" stroke="#5a5a5a" stroke-width="0.8" stroke-dasharray="1 0.6"/><path d="M581.6,51.8 L594,63.8" stroke="#8a8a8a" stroke-width="0.9"/><rect x="607.3" y="52.1" width="11.8" height="11.4" fill="none" stroke="#e0e0e0" stroke-width="1.5"/><path d="M631.9,50.7 H645.8 V57 M639,64.1 H631.9 V50.7" fill="none" stroke="#8a8a8a" stroke-width="0.8" stroke-dasharray="1 0.6"/><rect x="639" y="57.3" width="8.9" height="8.4" fill="#f4f4f4"/><circle cx="643.4" cy="61.6" r="2.3" fill="#1f1f1f"/><path d="M657.9,55 L663.1,58.3 L657.9,61.6Z" fill="#f0f0f0"/><path d="M664.8,53.5 V63.5" stroke="#f0f0f0" stroke-width="0.9"/><path d="M672.6,55.2 L667,58.3 L672.6,61.4Z" fill="none" stroke="#c8c8c8" stroke-width="0.9"/><circle cx="690.3" cy="58.8" r="5.6" fill="none" stroke="#e8e8e8" stroke-width="1.1" stroke-dasharray="1.8 1.2"/><path d="M684.9,52 L697.2,65.4" stroke="#f0f0f0" stroke-width="1.3"/><path d="M689.2,51.6 L691.6,53.4 M689.2,51.6 L691.8,50.4" stroke="#f0f0f0" stroke-width="1"/><rect x="706.8" y="46.6" width="0.9" height="22.4" fill="#3c3c3c"/><rect x="737.2" y="46.6" width="0.9" height="22.4" fill="#3c3c3c"/><rect x="717.1" y="53.5" width="10.2" height="9.6" rx="1.4" fill="#f4f4f4"/><path d="M719.6,61 C719.6,58.4 721.2,57.2 723.2,57.2" fill="none" stroke="#2a2a2a" stroke-width="1.4"/><path d="M722.6,55.2 L725.6,57.2 L722.6,59.2Z" fill="#2a2a2a" transform="rotate(-20 723.5 57.2)"/><rect x="747.75" y="52.95" width="1.1" height="1.1" fill="#9a9a9a"/><rect x="747.75" y="55.20" width="1.1" height="1.1" fill="#9a9a9a"/><rect x="747.75" y="57.45" width="1.1" height="1.1" fill="#9a9a9a"/><rect x="747.75" y="59.70" width="1.1" height="1.1" fill="#9a9a9a"/><rect x="747.75" y="61.95" width="1.1" height="1.1" fill="#9a9a9a"/><rect x="749.82" y="52.95" width="1.1" height="1.1" fill="#9a9a9a"/><rect x="749.82" y="55.20" width="1.1" height="1.1" fill="#9a9a9a"/><rect x="749.82" y="57.45" width="1.1" height="1.1" fill="#9a9a9a"/><rect x="749.82" y="59.70" width="1.1" height="1.1" fill="#9a9a9a"/><rect x="749.82" y="61.95" width="1.1" height="1.1" fill="#9a9a9a"/><rect x="751.89" y="52.95" width="1.1" height="1.1" fill="#9a9a9a"/><rect x="751.89" y="55.20" width="1.1" height="1.1" fill="#9a9a9a"/><rect x="751.89" y="57.45" width="1.1" height="1.1" fill="#9a9a9a"/><rect x="751.89" y="59.70" width="1.1" height="1.1" fill="#9a9a9a"/><rect x="751.89" y="61.95" width="1.1" height="1.1" fill="#9a9a9a"/><rect x="753.96" y="52.95" width="1.1" height="1.1" fill="#9a9a9a"/><rect x="753.96" y="55.20" width="1.1" height="1.1" fill="#9a9a9a"/><rect x="753.96" y="57.45" width="1.1" height="1.1" fill="#9a9a9a"/><rect x="753.96" y="59.70" width="1.1" height="1.1" fill="#9a9a9a"/><rect x="753.96" y="61.95" width="1.1" height="1.1" fill="#9a9a9a"/></svg>
<div id="status" class="abs">3000*2732px 350dpi 45% ブラシ: 10.0px 100%</div>
<div id="home" class="abs"></div>
</div>
</body>
</html>
